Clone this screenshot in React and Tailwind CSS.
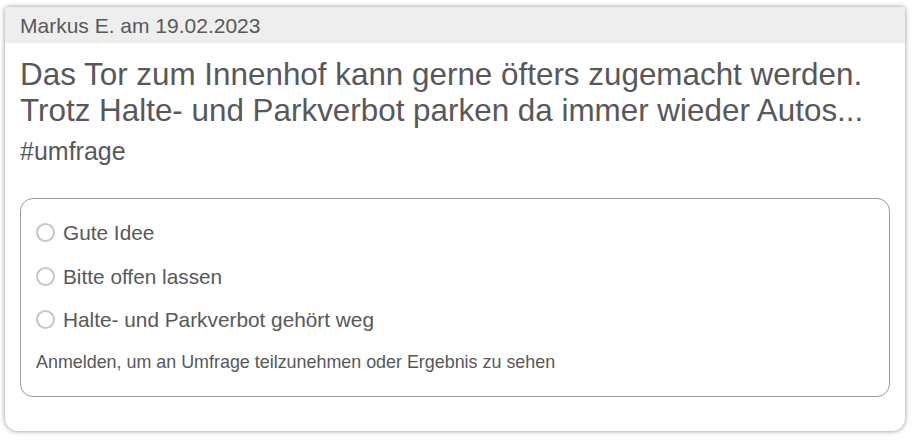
const OPTIONS = ['Gute Idee', 'Bitte offen lassen', 'Halte- und Parkverbot gehört weg']

function Radio() {
  return (
    <span className="inline-block w-[19px] h-[19px] rounded-full border-2 border-[#c6c6c6] bg-white shrink-0" />
  )
}

export default function App() {
  return (
    <div className="bg-white min-h-[445px] pt-[7px] px-[5px] font-['Liberation_Sans',Arial,sans-serif] text-[#585858]">
      <div className="w-[900px] h-[424px] bg-white rounded-t-[4px] rounded-b-[13px] shadow-[0_0_5px_rgba(0,0,0,0.45)] overflow-hidden">
        {/* Header */}
        <div className="h-[36px] bg-[#eeeeee] px-[15px] flex items-center text-[21px] leading-none">
          Markus E. am 19.02.2023
        </div>

        <div className="px-[15px] pt-[14px]">
          <p className="text-[31.4px] leading-[36px]">
            Das Tor zum Innenhof kann gerne öfters zugemacht werden.
            <br />
            Trotz Halte- und Parkverbot parken da immer wieder Autos...
          </p>
          <p className="text-[25px] leading-[29px] mt-[8px]">#umfrage</p>

          {/* Poll */}
          <div className="mt-[32px] h-[199px] border border-[#999] rounded-[13px] px-[15px] pt-[12px]">
            {OPTIONS.map(opt => (
              <div key={opt} className="h-[43.5px] flex items-center gap-[8px] text-[20.8px]">
                <Radio />
                <span>{opt}</span>
              </div>
            ))}
            <p className="text-[17.9px] leading-[21px] mt-[10px]">
              Anmelden, um an Umfrage teilzunehmen oder Ergebnis zu sehen
            </p>
          </div>
        </div>
      </div>
    </div>
  )
}
